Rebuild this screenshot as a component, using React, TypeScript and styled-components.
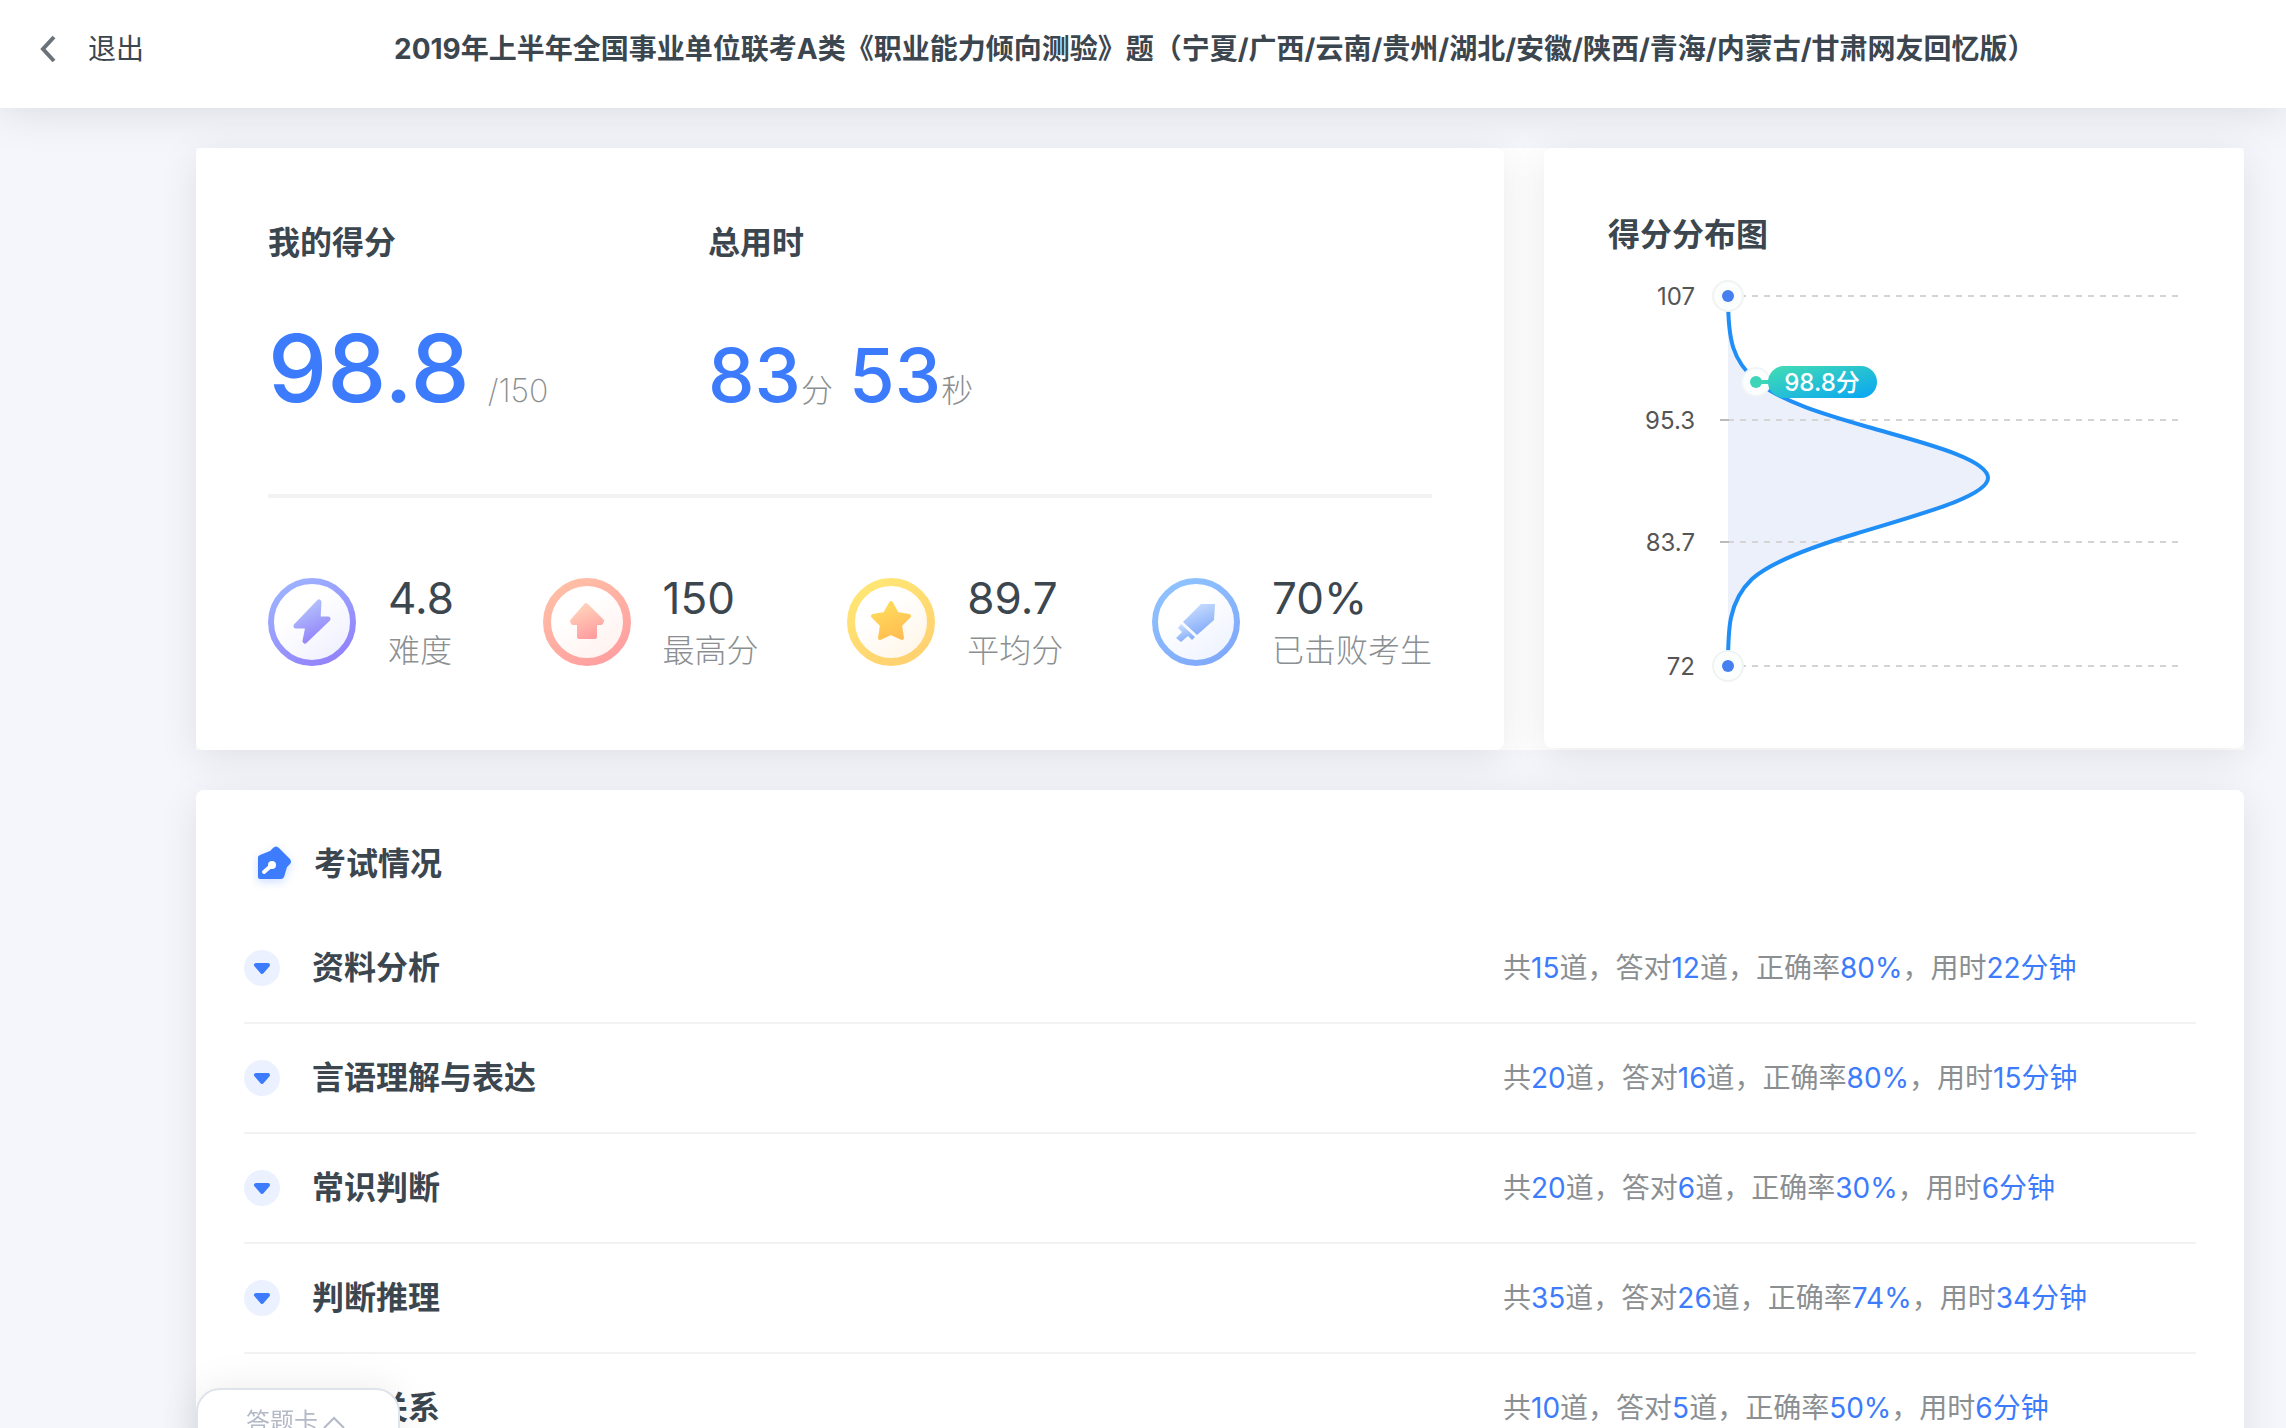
import React from "react";
import styled, { createGlobalStyle } from "styled-components";

const GlobalStyle = createGlobalStyle`
  * { box-sizing: border-box; }
  html { scrollbar-width: none; }
  body {
    margin: 0;
    background: #f5f6fb;
    color: #3c464f;
    font-family: Inter, "Noto Sans CJK SC", sans-serif;
  }
  h1, h2, h3, p, dl, dd, dt, ul { margin: 0; padding: 0; }
`;

const Header = styled.header`
  display: grid;
  grid-template-columns: 394px 1fr;
  align-items: center;
  height: 108px;
  padding-bottom: 10px;
  background: #fff;
  box-shadow: 0 0 48px rgba(0, 0, 0, 0.13);
`;

const BackButton = styled.button`
  display: flex;
  align-items: center;
  gap: 32px;
  justify-self: start;
  padding: 0 0 0 40px;
  border: 0;
  background: none;
  color: inherit;
  font: inherit;
  font-size: 28px;
  line-height: 40px;
`;

const PageTitle = styled.h1`
  font-size: 28px;
  line-height: 40px;
  font-weight: 700;
  white-space: nowrap;
`;

const Main = styled.main`
  display: grid;
  gap: 40px;
  padding: 40px 42px 40px 196px;
`;

const Summary = styled.div`
  display: grid;
  grid-template-columns: 1308fr 700fr;
  align-items: start;
  gap: 40px;
  background: #fff;
`;

const Card = styled.section`
  border-radius: 8px;
  background: #fff;
  box-shadow: 0 8px 40px rgba(0, 0, 0, 0.09);
`;

const ScoreCard = styled(Card)`
  padding: 72px;
`;

const ChartCard = styled(Card)`
  padding: 64px;
`;

const DetailCard = styled(Card)`
  padding: 48px 48px 0;
`;

const CardTitle = styled.h2`
  font-size: 32px;
  line-height: 46px;
  font-weight: 600;
`;

const Totals = styled.div`
  display: grid;
  grid-template-columns: 440px 1fr;
  grid-template-rows: 46px 120px;
  row-gap: 42px;
  align-items: baseline;
`;

const Figure = styled.p`
  line-height: 120px;
  white-space: nowrap;
`;

const Big = styled.span<{ $size: number }>`
  color: #3c7cfc;
  font-size: ${(p) => p.$size}px;
  font-weight: 500;
`;

const Unit = styled.span<{ $before?: number; $after?: number }>`
  margin-left: ${(p) => p.$before ?? 0}px;
  margin-right: ${(p) => p.$after ?? 0}px;
  color: #8b8f92;
  font-size: 32px;
  font-weight: 200;
  line-height: 46px;
`;

const Divider = styled.hr`
  height: 4px;
  margin: 66px 0 74px;
  border: 0;
  background: #f2f2f2;
`;

const Stats = styled.dl`
  display: flex;
  justify-content: space-between;
`;

const Stat = styled.div`
  display: grid;
  grid-template-columns: 88px auto;
  grid-template-rows: 52px 54px;
  column-gap: 32px;
  align-items: center;
`;

const StatIcon = styled.svg`
  grid-row: 1 / 3;
  align-self: start;
  width: 88px;
  height: 88px;
  margin-top: 6px;
`;

const StatValue = styled.dd`
  grid-column: 2;
  grid-row: 1;
  font-size: 44px;
  line-height: 52px;
`;

const StatLabel = styled.dt`
  grid-column: 2;
  grid-row: 2;
  color: #8b8f92;
  font-size: 32px;
  line-height: 54px;
  font-weight: 200;
`;

const Chart = styled.svg`
  display: block;
  width: 100%;
  height: auto;
  margin-top: 22px;
  font-size: 24px;
`;

const DetailHead = styled.div`
  display: grid;
  grid-template-columns: 52px 1fr;
  align-items: center;
  padding: 0 0 0 8px;
  gap: 10px;
`;

const PenIcon = styled.svg`
  width: 52px;
  height: 52px;
`;

const Rows = styled.ul`
  list-style: none;
  margin-top: 24px;
`;

const Row = styled.li`
  display: grid;
  grid-template-columns: 36px 1159px 1fr;
  column-gap: 32px;
  align-items: center;
  height: 110px;
  border-bottom: 2px solid #f2f2f2;
`;

const Toggle = styled.button`
  display: grid;
  place-items: center;
  width: 36px;
  height: 36px;
  padding: 0;
  border: 0;
  border-radius: 50%;
  background: #ebf1ff;
`;

const Subject = styled.h3`
  font-size: 32px;
  line-height: 46px;
  font-weight: 600;
`;

const Result = styled.p`
  color: #8b8f92;
  font-size: 28px;
  line-height: 40px;
  white-space: nowrap;
`;

const Hit = styled.span`
  color: #3c7cfc;
`;

const AnswerCard = styled.button`
  position: fixed;
  left: 196px;
  bottom: -24px;
  display: flex;
  justify-content: center;
  gap: 4px;
  width: 204px;
  height: 64px;
  padding: 14px 4px 0 0;
  border: 2px solid #dfe3ea;
  border-radius: 24px 24px 0 0;
  background: #fff;
  box-shadow: 0 0 40px rgba(0, 0, 0, 0.08);
  color: #b3b9c6;
  font: inherit;
  font-size: 24px;
  line-height: 36px;
`;

type IconKind = "bolt" | "up" | "star" | "sword";

const palette: Record<IconKind, { from: string; to: string; soft: string; tint: string; ring: number }> = {
  bolt: { from: "#9db3ff", to: "#9280fb", soft: "#b5c6fb", tint: "#f0f1ff", ring: 6 },
  up: { from: "#ffbfa6", to: "#ff9ea0", soft: "#ffd3bb", tint: "#fff2ef", ring: 8 },
  star: { from: "#ffe774", to: "#ffd070", soft: "#ffdc5c", tint: "#fff6e8", ring: 8 },
  sword: { from: "#8fc3ff", to: "#80a8fb", soft: "#cadffd", tint: "#eef3ff", ring: 6 },
};

const glyphs: Record<IconKind, React.ReactNode> = {
  bolt: <path d="M51 24 L50 41 H60 L37 63 L40 48 H28 Z" strokeWidth="5" />,
  up: <path d="M43 27 L59 43 L58 45 H52 V59 H36 V45 H30 L29 43 Z" strokeWidth="4" />,
  star: (
    <path
      d="M44 25 L50 36 L62 38 L53 47 L55 60 L44 55 L33 60 L35 47 L26 38 L38 36 Z"
      strokeWidth="4"
    />
  ),
  sword: (
    <g strokeWidth="0">
      <path d="M49 26 H63 L62 42 L45 57 L31 44 Z" />
      <path d="M29 46 L43 59 L40 62 L36 58 L29 64 L24 60 L30 54 L26 50 Z" />
    </g>
  ),
};

function BadgeIcon({ kind }: { kind: IconKind }) {
  const c = palette[kind];
  return (
    <StatIcon viewBox="0 0 88 88" aria-hidden="true">
      <defs>
        <linearGradient id={`${kind}-ring`} x1="0.2" y1="0" x2="0.8" y2="1">
          <stop offset="0" stopColor={c.from} />
          <stop offset="1" stopColor={c.to} />
        </linearGradient>
        <linearGradient id={`${kind}-face`} x1="0.2" y1="0.1" x2="0.8" y2="0.9">
          <stop offset="0.3" stopColor="#fff" />
          <stop offset="1" stopColor={c.tint} />
        </linearGradient>
        <linearGradient id={`${kind}-glyph`} x1="0.3" y1="0" x2="0.7" y2="1">
          <stop offset="0" stopColor={c.soft} />
          <stop offset="1" stopColor={kind === "star" ? "#ffbd52" : c.to} />
        </linearGradient>
      </defs>
      <circle
        cx="44"
        cy="44"
        r={44 - c.ring / 2}
        fill={`url(#${kind}-face)`}
        stroke={`url(#${kind}-ring)`}
        strokeWidth={c.ring}
      />
      <g fill={`url(#${kind}-glyph)`} stroke={`url(#${kind}-glyph)`} strokeLinejoin="round">
        {glyphs[kind]}
      </g>
    </StatIcon>
  );
}

const stats: { kind: IconKind; value: string; label: string }[] = [
  { kind: "bolt", value: "4.8", label: "难度" },
  { kind: "up", value: "150", label: "最高分" },
  { kind: "star", value: "89.7", label: "平均分" },
  { kind: "sword", value: "70%", label: "已击败考生" },
];

const subjects = [
  { name: "资料分析", total: 15, right: 12, rate: 80, minutes: 22 },
  { name: "言语理解与表达", total: 20, right: 16, rate: 80, minutes: 15 },
  { name: "常识判断", total: 20, right: 6, rate: 30, minutes: 6 },
  { name: "判断推理", total: 35, right: 26, rate: 74, minutes: 34 },
  { name: "数量关系", total: 10, right: 5, rate: 50, minutes: 6 },
];

const levels = [
  { label: "107", y: 16, end: true },
  { label: "95.3", y: 140, end: false },
  { label: "83.7", y: 262, end: false },
  { label: "72", y: 386, end: true },
];

const curve = [
  "M120 16",
  "C120 60 124 80 149 102",
  "C175 122 215 134 260 147",
  "C308 161 380 178 380 198",
  "C380 217 305 236 247 254",
  "C200 268 162 283 144 299",
  "C120 322 120 350 120 386",
].join(" ");

function ScoreChart() {
  return (
    <Chart viewBox="0 0 572 404" role="img" aria-label="得分分布图">
      <defs>
        <linearGradient id="pill" x1="0" y1="0" x2="1" y2="1">
          <stop offset="0.1" stopColor="#3dd8b8" />
          <stop offset="1" stopColor="#08a5f5" />
        </linearGradient>
      </defs>
      <path d={curve} fill="#ecf0fb" />
      {levels.map((l) => (
        <g key={l.label}>
          <text x="87" y={l.y + 9} textAnchor="end" fill="#555">
            {l.label}
          </text>
          <line x1="120" x2="572" y1={l.y} y2={l.y} stroke="#d4d4d4" strokeWidth="2" strokeDasharray="6 6" />
          {!l.end && <line x1="112" x2="121" y1={l.y} y2={l.y} stroke="#bbb" strokeWidth="2" />}
        </g>
      ))}
      <path d={curve} fill="none" stroke="#1f8ef7" strokeWidth="4" />
      {levels
        .filter((l) => l.end)
        .map((l) => (
          <g key={l.label}>
            <circle cx="120" cy={l.y} r="15" fill="#fcfefe" stroke="#f0f3f3" strokeWidth="2" />
            <circle cx="120" cy={l.y} r="6" fill="#4680f0" />
          </g>
        ))}
      <circle cx="148" cy="102" r="14" fill="#fcfefe" stroke="#f2f5f7" strokeWidth="2" />
      <circle cx="148" cy="102" r="6" fill="#3dd5b8" />
      <path d="M148 102 H164" stroke="#3dd5b8" strokeWidth="4" />
      <rect x="160" y="86" width="109" height="32" rx="16" fill="url(#pill)" />
      <text x="214" y="111" textAnchor="middle" fill="#fff" fontWeight="500">
        98.8分
      </text>
    </Chart>
  );
}

export default function App() {
  return (
    <>
      <GlobalStyle />
      <Header>
        <BackButton type="button">
          <svg width="16" height="28" viewBox="0 0 16 28" fill="none" stroke="#6b7278" strokeWidth="4" aria-hidden="true">
            <path d="M14 2 L3 14 L14 26" />
          </svg>
          退出
        </BackButton>
        <PageTitle>
          2019年上半年全国事业单位联考A类《职业能力倾向测验》题（宁夏/广西/云南/贵州/湖北/安徽/陕西/青海/内蒙古/甘肃网友回忆版）
        </PageTitle>
      </Header>
      <Main>
        <Summary>
          <ScoreCard>
            <Totals>
              <CardTitle>我的得分</CardTitle>
              <CardTitle>总用时</CardTitle>
              <Figure>
                <Big $size={94}>98.8</Big>
                <Unit $before={18}>/150</Unit>
              </Figure>
              <Figure>
                <Big $size={74}>83</Big>
                <Unit $after={16}>分</Unit>
                <Big $size={74}>53</Big>
                <Unit>秒</Unit>
              </Figure>
            </Totals>
            <Divider />
            <Stats>
              {stats.map((s) => (
                <Stat key={s.kind}>
                  <BadgeIcon kind={s.kind} />
                  <StatLabel>{s.label}</StatLabel>
                  <StatValue>{s.value}</StatValue>
                </Stat>
              ))}
            </Stats>
          </ScoreCard>
          <ChartCard>
            <CardTitle>得分分布图</CardTitle>
            <ScoreChart />
          </ChartCard>
        </Summary>
        <DetailCard>
          <DetailHead>
            <PenIcon viewBox="0 0 52 52" aria-hidden="true">
              <defs>
                <filter id="pen-glow" x="-30%" y="-30%" width="160%" height="160%">
                  <feDropShadow dx="0" dy="3" stdDeviation="4" floodColor="#3c7cfc" floodOpacity="0.25" />
                </filter>
              </defs>
              <path
                d="M8 17 L18 13 L21 10 Q24 7 27 10 L38 21 Q40 24 38 26 L35 29 L32 39 Q31 41 29 41 H8 Q6 41 6 39 V19 Q6 18 8 17 Z"
                fill="#3c7cfc"
                filter="url(#pen-glow)"
              />
              <path d="M12 34 L20 27" stroke="#fff" strokeWidth="4" strokeLinecap="round" />
              <circle cx="20" cy="27" r="4" fill="#fff" />
            </PenIcon>
            <CardTitle>考试情况</CardTitle>
          </DetailHead>
          <Rows>
            {subjects.map((s) => (
              <Row key={s.name}>
                <Toggle type="button" aria-label={`展开${s.name}`}>
                  <svg width="18" height="14" viewBox="0 0 18 14" aria-hidden="true">
                    <path d="M3 4 H15 L9 11 Z" fill="#3c7cfc" stroke="#3c7cfc" strokeWidth="4" strokeLinejoin="round" />
                  </svg>
                </Toggle>
                <Subject>{s.name}</Subject>
                <Result>
                  共<Hit>{s.total}</Hit>道，答对<Hit>{s.right}</Hit>道，正确率<Hit>{s.rate}%</Hit>，用时
                  <Hit>{s.minutes}分钟</Hit>
                </Result>
              </Row>
            ))}
          </Rows>
        </DetailCard>
      </Main>
      <AnswerCard type="button">
        答题卡
        <svg width="24" height="36" viewBox="0 0 24 36" fill="none" stroke="#b3b9c6" strokeWidth="2" aria-hidden="true">
          <path d="M2 24 L12 14 L22 24" />
        </svg>
      </AnswerCard>
    </>
  );
}
